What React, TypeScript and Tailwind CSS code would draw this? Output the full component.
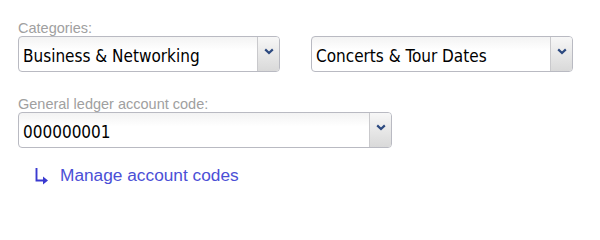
function Chevron() {
  return (
    <svg width="10" height="7" viewBox="0 0 10 7" className="mt-[-6px]">
      <path d="M1.2 1.4 L5 5 L8.8 1.4" fill="none" stroke="#2d4a80" strokeWidth="2.2" />
    </svg>
  );
}

function FakeSelect({ value, width }: { value: string; width: string }) {
  return (
    <div
      className={`${width} flex h-[36px] overflow-hidden rounded-[4px] border border-[#b9bac2] bg-gradient-to-b from-[#f3f3f3] to-white to-40%`}
    >
      <div className="flex flex-1 items-center pl-[4px] pt-[5px] font-['DejaVu_Sans_Condensed','DejaVu_Sans',sans-serif] text-[17px] text-black">
        {value}
      </div>
      <div className="flex w-[22px] items-center justify-center border-l border-[#c9c9cc] bg-gradient-to-b from-[#f7f7f7] to-[#d9d9d9]">
        <Chevron />
      </div>
    </div>
  );
}

export default function App() {
  return (
    <div className="h-[200px] w-[600px] bg-white pl-[18px] pt-[21px] font-['Liberation_Sans',sans-serif]">
      <div className="text-[14.5px] leading-[15px] text-[#a0a0a0]">Categories:</div>
      <div className="flex gap-[31px]">
        <FakeSelect value="Business & Networking" width="w-[262px]" />
        <FakeSelect value="Concerts & Tour Dates" width="w-[262px]" />
      </div>

      <div className="mt-[25px] text-[14.5px] leading-[15px] text-[#a0a0a0]">General ledger account code:</div>
      <FakeSelect value="000000001" width="w-[374px]" />

      <div className="mt-[15px] flex items-center gap-[10px] pl-[16px]">
        <svg width="16" height="18" viewBox="0 0 16 18">
          <path d="M2.5 1 V13.5 H10" fill="none" stroke="#3a3ad0" strokeWidth="1.9" />
          <path d="M9 9.5 L14 13.5 L9 17.5 Z" fill="#3a3ad0" />
        </svg>
        <a className="text-[17.3px] text-[#4b4fd6]" href="#">
          Manage account codes
        </a>
      </div>
    </div>
  );
}
